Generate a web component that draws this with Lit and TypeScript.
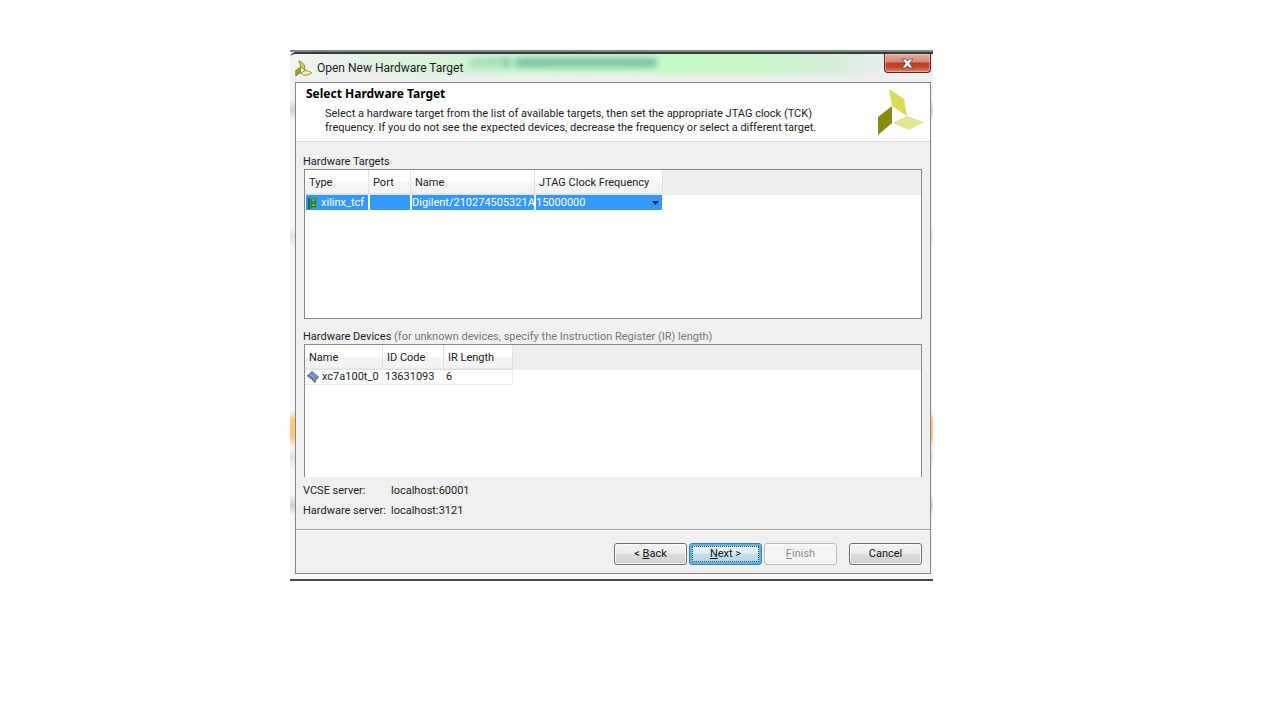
import { LitElement, html, css } from "lit";
import { customElement, state } from "lit/decorators.js";

const BASE = css`
  :host {
    display: block;
    box-sizing: border-box;
    font-family: Roboto, "Liberation Sans", sans-serif;
    font-size: 11px;
    line-height: 14px;
    color: #222;
  }
  * {
    box-sizing: border-box;
  }
`;

@customElement("title-bar")
export class TitleBar extends LitElement {
  static styles = [
    BASE,
    css`
      .bar {
        display: flex;
        align-items: flex-start;
        height: 28px;
        padding: 0 2px 0 5px;
        overflow: hidden;
        position: relative;
        background: linear-gradient(
          90deg,
          #f2f4f3 0%,
          #e3f2e5 12%,
          #ccf4d0 32%,
          #c6fbc9 48%,
          #c6f7c8 72%,
          #d4eed8 84%,
          #e8eeea 92%,
          #ececec 100%
        );
      }
      .bar::after {
        content: "";
        position: absolute;
        inset: 17px 0 0 0;
        background: linear-gradient(180deg, rgba(240, 243, 241, 0), #eef0ef 60%);
      }
      .ghost {
        position: absolute;
        top: 4px;
        left: 28%;
        width: 29%;
        height: 9px;
        background: linear-gradient(90deg, #a5dcb8 0 18%, #6fbf9c 18% 19%, #7cc6a4 19% 21%, #c3f2c8 22% 24%, #76bea4 25% 100%);
        filter: blur(3px);
      }
      .icon {
        width: 17px;
        height: 17px;
        margin-top: 6px;
        position: relative;
        z-index: 1;
      }
      .title {
        flex: 1;
        margin: 5px 0 0 5px;
        font-size: 12px;
        line-height: 18px;
        font-weight: 400;
        color: #1c1c1c;
        position: relative;
        z-index: 1;
      }
      .close {
        width: 47px;
        height: 19px;
        padding: 0;
        display: grid;
        place-items: center;
        position: relative;
        z-index: 1;
        border: 1px solid #5c2620;
        border-top: 0;
        border-radius: 0 0 4px 4px;
        background: linear-gradient(180deg, #e9aa9f 0%, #d68679 44%, #bd3a24 50%, #c14a33 75%, #dc8a72 100%);
        box-shadow: inset 0 0 0 1px rgba(255, 220, 210, 0.45);
      }
      .close svg {
        width: 13px;
        height: 11px;
      }
    `,
  ];

  render() {
    return html`
      <header class="bar">
        <div class="ghost"></div>
        <svg class="icon" viewBox="0 0 17 17" aria-hidden="true">
          <g stroke="#85851c" stroke-width="0.9" stroke-linejoin="round">
            <path d="M4 1C7 2 9 4 9.500 6L10 10L6 7Z" fill="#d3d548" />
            <path d="M0.800 10.500L5.500 7V12.500L0.800 16Z" fill="#a3a321" />
            <path d="M5.500 13L10 10.500C12.500 10.500 15 11.500 16.500 13C14 15 11 15.500 8.500 15Z" fill="#eeefb4" />
          </g>
        </svg>
        <h1 class="title">Open New Hardware Target</h1>
        <button class="close" type="button" aria-label="Close">
          <svg viewBox="0 0 13 11" aria-hidden="true">
            <path
              d="M1 1H4.6L6.5 3.1L8.4 1H12L8.6 5.5L12 10H8.4L6.5 7.8L4.6 10H1L4.4 5.5Z"
              fill="#fff"
              stroke="#5a5560"
              stroke-width="1"
            />
          </svg>
        </button>
      </header>
    `;
  }
}

const boardIcon = html`
  <svg class="icon" viewBox="0 0 12 12" aria-hidden="true">
    <path d="M2 1L11 0V11L2 12Z" fill="#3aa263" />
    <path d="M2 1L4 1V12H2Z" fill="#1b6b42" />
    <path d="M5 2L10 1.500V10L5 10.500Z" fill="#27794b" />
    <path d="M6 3H9M6 8H9" stroke="#8fd8a6" />
    <path d="M6 4.500H9V6.500H6Z" fill="#a0523c" />
  </svg>
`;

const chipIcon = html`
  <svg class="icon" viewBox="0 0 12 12" aria-hidden="true">
    <path d="M5 0L12 6L8 12L0 5Z" fill="#b3b684" />
    <path d="M0 5L8 12L9 10.500L1 3.500Z" fill="#6d7158" />
    <path d="M2 6L3 7M4 8L5 9M6 9.500L7 10.500" stroke="#e6e6c8" />
    <path d="M5 0.500L11.500 6L7.500 9.500L1 4.500Z" fill="#5f88c8" stroke="#46638f" stroke-width="0.7" />
    <path d="M3.500 3.500L8 7.500M5.500 2L9.500 5.500" stroke="#9dbce8" stroke-width="0.9" />
  </svg>
`;

@customElement("app-root")
export class AppRoot extends LitElement {
  @state() private frequency = "15000000";

  static styles = [
    BASE,
    css`
      :host {
        display: grid;
        grid-template-columns: 290fr 643fr 347fr;
        min-height: 100vh;
        align-items: start;
        padding: 50px 0;
        background: #fff;
      }
      .window {
        grid-column: 2;
        border-top: 2px solid #7d8a84;
        border-bottom: 2px solid #47494b;
        background: linear-gradient(
          180deg,
          #f4f4f4 0 9%,
          #d2d2d2 11%,
          #f6f6f6 13% 33%,
          #e2e2e2 35%,
          #f6f6f6 37% 68%,
          #fbc682 70% 73%,
          #f6f6f6 75%,
          #dedede 77%,
          #f6f6f6 79% 84%,
          #cfcfcf 86%,
          #f6f6f6 88% 100%
        );
      }
      .glass {
        border-top: 2px solid #353b38;
        border-radius: 6px 0 0 0;
        overflow: hidden;
        padding-bottom: 5px;
      }
      .frame {
        margin: 0 2px 0 5px;
        border: 1px solid #858585;
        background: #f0f0f0;
      }
      .head {
        display: flex;
        justify-content: space-between;
        padding: 4px 6px 6px 10px;
        background: #fff;
        border-bottom: 1px solid #dcdcdc;
      }
      .heading {
        margin: 0;
        font-family: "Noto Sans", sans-serif;
        font-size: 12px;
        line-height: 14px;
        font-weight: 700;
        color: #000;
      }
      .intro {
        margin: 6px 0 0 19px;
      }
      .brand {
        flex: none;
        width: 46px;
        height: 46px;
        margin-top: 2px;
      }
      .body {
        padding: 13px 8px 11px;
      }
      .caption {
        margin: 0 0 0 -1px;
        font-size: 11px;
        line-height: 14px;
        font-weight: 400;
      }
      .hint {
        color: #777;
      }
      .list {
        height: 150px;
        margin-bottom: 11px;
        border: 1px solid #85888d;
        background: linear-gradient(#efefef, #efefef) top / 100% 25px no-repeat #fff;
      }
      .list.devices {
        height: 133px;
        border-bottom: 0;
        margin-bottom: 0;
      }
      table {
        border-collapse: separate;
        border-spacing: 0;
        table-layout: fixed;
      }
      .targets table {
        width: 358px;
      }
      .devices table {
        width: 208px;
      }
      .w64 { width: 64px; }
      .w42 { width: 42px; }
      .w124 { width: 124px; }
      .w128 { width: 128px; }
      .w78 { width: 78px; }
      .w61 { width: 61px; }
      .w69 { width: 69px; }
      th {
        height: 25px;
        padding: 0 4px;
        text-align: left;
        font-weight: 400;
        white-space: nowrap;
        border-right: 1px solid #dfe3e8;
        background: linear-gradient(180deg, #fff 0 45%, #f5f6f8 50%, #f1f2f4 92%, #dfe1e4 96%);
      }
      td {
        height: 15px;
        padding: 0 2px;
        white-space: nowrap;
        border-right: 1px solid #ececec;
        border-bottom: 1px solid #ececec;
      }
      .picked td {
        padding: 0;
        color: #fff;
        background: #3399ff;
        border: 1px solid #fff;
        border-width: 0 1px;
      }
      .item {
        display: flex;
        align-items: center;
        gap: 3px;
      }
      .item .icon {
        flex: none;
        width: 12px;
        height: 12px;
      }
      .combo {
        display: grid;
        align-items: center;
      }
      .combo select,
      .combo svg {
        grid-area: 1 / 1;
      }
      .combo select {
        appearance: none;
        width: 100%;
        height: 14px;
        padding: 0;
        border: 0;
        outline: 0;
        background: transparent;
        color: inherit;
        font: inherit;
      }
      .combo svg {
        justify-self: end;
        width: 7px;
        height: 4px;
        margin-right: 3px;
        pointer-events: none;
      }
      .servers {
        display: grid;
        grid-template-columns: 88px 1fr;
        row-gap: 6px;
        margin: 7px 0 0 -1px;
      }
      .servers dt {
        white-space: nowrap;
      }
      .servers dd {
        margin: 0;
      }
      .foot {
        display: flex;
        justify-content: flex-end;
        gap: 2px;
        padding: 13px 8px 8px;
        border-top: 1px solid #a0a0a0;
        box-shadow: inset 0 1px 0 #fff;
      }
      .btn {
        width: 73px;
        height: 22px;
        padding: 0;
        font: inherit;
        color: #111;
        border: 1px solid #707070;
        border-radius: 3px;
        background: linear-gradient(180deg, #f3f3f3 0%, #ebebeb 48%, #dddddd 52%, #cfcfcf 100%);
        box-shadow: inset 0 0 0 1px #fafafa;
      }
      .btn.primary {
        border-color: #3c7fb1;
        background: linear-gradient(180deg, #eaf3f9 0%, #dcecf6 48%, #c3dff0 52%, #b4d3e6 100%);
        box-shadow: inset 0 0 0 2px #5fb8dc;
        outline: 1px dotted #26455a;
        outline-offset: -4px;
      }
      .btn:disabled {
        color: #8d8d8d;
        border-color: #b8bcbe;
        background: #f4f4f4;
      }
      .btn.cancel {
        margin-left: 10px;
      }
    `,
  ];

  private onFrequency(e: Event) {
    this.frequency = (e.target as HTMLSelectElement).value;
  }

  render() {
    return html`
      <main class="window">
        <div class="glass">
          <title-bar></title-bar>
          <div class="frame">
            <section class="head">
              <div>
                <h2 class="heading">Select Hardware Target</h2>
                <p class="intro">
                  Select a hardware target from the list of available targets, then set the appropriate JTAG clock
                  (TCK)<br />frequency. If you do not see the expected devices, decrease the frequency or select a
                  different target.
                </p>
              </div>
              <svg class="brand" viewBox="0 0 46 46" aria-hidden="true">
                <path d="M11 0L26 10L29 27L14 17Z" fill="#d9dc55" />
                <path d="M0 28L14 17V34L0 46Z" fill="#8a8b0c" />
                <path d="M14 34L29 27L46 33L31 41Z" fill="#e3e595" />
              </svg>
            </section>

            <section class="body">
              <h3 class="caption" id="targets">Hardware Targets</h3>
              <div class="list targets">
                <table aria-labelledby="targets">
                  <thead>
                    <tr>
                      <th class="w64">Type</th>
                      <th class="w42">Port</th>
                      <th class="w124">Name</th>
                      <th class="w128">JTAG Clock Frequency</th>
                    </tr>
                  </thead>
                  <tbody>
                    <tr class="picked">
                      <td><span class="item">${boardIcon}xilinx_tcf</span></td>
                      <td></td>
                      <td>Digilent/210274505321A</td>
                      <td>
                        <span class="combo">
                          <select aria-label="JTAG Clock Frequency" @change=${this.onFrequency}>
                            <option value=${this.frequency} selected>${this.frequency}</option>
                          </select>
                          <svg viewBox="0 0 7 4" aria-hidden="true"><path d="M0 0H7L3.5 4Z" fill="#0b2440" /></svg>
                        </span>
                      </td>
                    </tr>
                  </tbody>
                </table>
              </div>

              <h3 class="caption" id="devices">
                Hardware Devices
                <span class="hint">(for unknown devices, specify the Instruction Register (IR) length)</span>
              </h3>
              <div class="list devices">
                <table aria-labelledby="devices">
                  <thead>
                    <tr>
                      <th class="w78">Name</th>
                      <th class="w61">ID Code</th>
                      <th class="w69">IR Length</th>
                    </tr>
                  </thead>
                  <tbody>
                    <tr>
                      <td><span class="item">${chipIcon}xc7a100t_0</span></td>
                      <td>13631093</td>
                      <td>6</td>
                    </tr>
                  </tbody>
                </table>
              </div>

              <dl class="servers">
                <dt>VCSE server:</dt>
                <dd>localhost:60001</dd>
                <dt>Hardware server:</dt>
                <dd>localhost:3121</dd>
              </dl>
            </section>

            <footer class="foot">
              <button class="btn" type="button">&lt; <u>B</u>ack</button>
              <button class="btn primary" type="button"><u>N</u>ext &gt;</button>
              <button class="btn" type="button" disabled><u>F</u>inish</button>
              <button class="btn cancel" type="button">Cancel</button>
            </footer>
          </div>
        </div>
      </main>
    `;
  }
}
